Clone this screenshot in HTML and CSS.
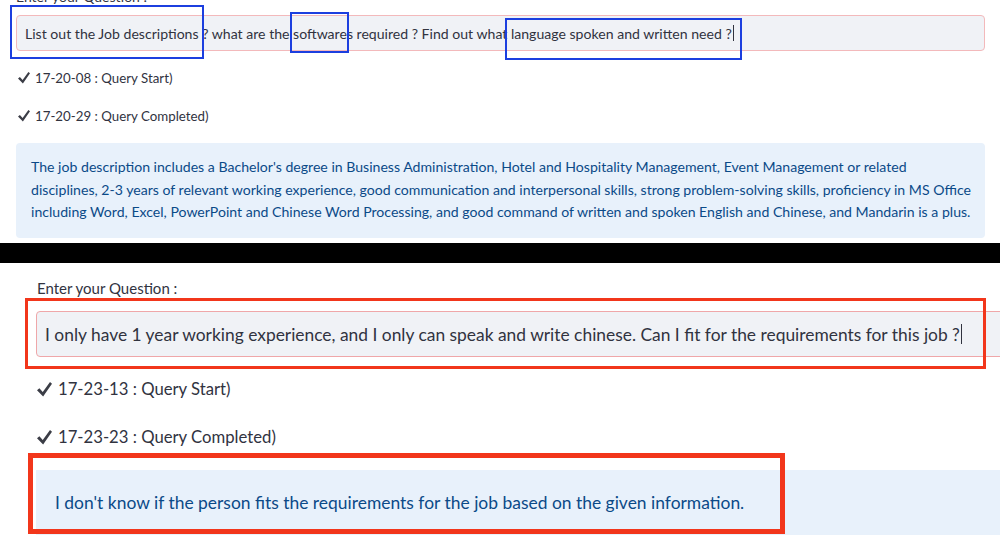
FILE: index.html
```html
<!DOCTYPE html>
<html>
<head>
<meta charset="utf-8">
<link rel="stylesheet" href="styles.css">
</head>
<body>
<div class="page">
  <section class="panel top">
    <div class="label">Enter your Question :</div>
    <div class="input">List out the Job descriptions ? what are the softwares required ? Find out what language spoken and written need ?<span class="caret"></span></div>
    <div class="status first"><svg class="check" viewBox="0 0 12 12"><polygon points="0,6.6 1.9,5 4.6,7.9 10.4,0 12,1.3 4.9,11.6"/></svg>17-20-08 : Query Start)</div>
    <div class="status"><svg class="check" viewBox="0 0 12 12"><polygon points="0,6.6 1.9,5 4.6,7.9 10.4,0 12,1.3 4.9,11.6"/></svg>17-20-29 : Query Completed)</div>
    <div class="info">The job description includes a Bachelor's degree in Business Administration, Hotel and Hospitality Management, Event Management or related<br>disciplines, 2-3 years of relevant working experience, good communication and interpersonal skills, strong problem-solving skills, proficiency in MS Office<br>including Word, Excel, PowerPoint and Chinese Word Processing, and good command of written and spoken English and Chinese, and Mandarin is a plus.</div>
    <div class="mark blue b1"></div>
    <div class="mark blue b2"></div>
    <div class="mark blue b3"></div>
  </section>
  <div class="divider"></div>
  <section class="panel bottom">
    <div class="label">Enter your Question :</div>
    <div class="input">I only have 1 year working experience, and I only can speak and write chinese. Can I fit for the requirements for this job ?<span class="caret"></span></div>
    <div class="status first"><svg class="check" viewBox="0 0 12 12"><polygon points="0,6.6 1.9,5 4.6,7.9 10.4,0 12,1.3 4.9,11.6"/></svg>17-23-13 : Query Start)</div>
    <div class="status"><svg class="check" viewBox="0 0 12 12"><polygon points="0,6.6 1.9,5 4.6,7.9 10.4,0 12,1.3 4.9,11.6"/></svg>17-23-23 : Query Completed)</div>
    <div class="info">I don't know if the person fits the requirements for the job based on the given information.</div>
    <div class="mark red r1"></div>
    <div class="mark red r2"></div>
  </section>
</div>
</body>
</html>
```

FILE: styles.css
```css
html, body {
  margin: 0;
  padding: 0;
  background: #ffffff;
  overflow: hidden;
}
.page {
  width: 1000px;
  height: 545px;
  overflow: hidden;
  font-family: Lato, "Noto Sans", sans-serif;
  color: #31333f;
}
.panel {
  position: relative;
  overflow: hidden;
  background: #ffffff;
}
.top {
  height: 243px;
  padding: 0 15px 0 16px;
  box-sizing: border-box;
  font-size: 14px;
}
.top .label {
  line-height: 20px;
  margin-top: -13px;
  margin-bottom: 8px;
}
.input {
  background: #f0f2f6;
  border: 1px solid #f3b9bb;
  border-radius: 4px;
  box-sizing: border-box;
  white-space: nowrap;
  display: flex;
  align-items: center;
}
.top .input {
  height: 36px;
  padding-left: 8px;
  font-size: 14.08px;
}
.caret {
  display: inline-block;
  width: 1px;
  height: 1.15em;
  background: #31333f;
  margin-left: 1px;
}
.status {
  display: flex;
  align-items: center;
}
.check {
  fill: #3b3d46;
  flex: none;
}
.top .status {
  height: 38px;
  padding-left: 2px;
  font-size: 13.3px;
}
.top .check {
  width: 12px;
  height: 12px;
  margin-right: 5px;
}
.top .status.first { margin-top: 8px; }
.info {
  background: #e8f1fb;
  color: #0b4a88;
  border-radius: 4px;
}
.top .info {
  margin-top: 8px;
  height: 95px;
  box-sizing: border-box;
  padding: 13px 15px 0 15px;
  font-size: 14.1px;
  line-height: 22.5px;
  white-space: nowrap;
}
.divider {
  height: 20px;
  background: #000000;
}
.bottom {
  height: 282px;
  padding-left: 36px;
  font-size: 16px;
}
.bottom .label {
  line-height: 20px;
  padding-top: 15px;
  padding-left: 1px;
  font-size: 15px;
}
.bottom .input {
  margin-top: 13px;
  width: 990px;
  height: 46px;
  padding-left: 8px;
  font-size: 17.4px;
  border-color: #efa7a9;
}
.bottom .status {
  height: 48px;
  padding-left: 1px;
  font-size: 16.7px;
}
.bottom .check {
  width: 15px;
  height: 15px;
  margin-right: 6px;
}
.bottom .status.first { margin-top: 8px; }
.bottom .info {
  margin-top: 9px;
  width: 990px;
  height: 65px;
  box-sizing: border-box;
  padding-left: 19px;
  display: flex;
  align-items: center;
  font-size: 17.45px;
  border-radius: 0;
}
.mark {
  position: absolute;
  box-sizing: border-box;
}
.blue { border: 2px solid #1c3fdf; }
.b1 { left: 10px; top: 5px; width: 194px; height: 54px; }
.b2 { left: 290px; top: 12px; width: 59px; height: 41px; }
.b3 { left: 505px; top: 18px; width: 237px; height: 42px; }
.red { border-color: #f2361b; border-style: solid; }
.r1 { left: 25px; top: 35px; width: 961px; height: 71px; border-width: 3px; }
.r2 { left: 28px; top: 190px; width: 757px; height: 81px; border-width: 5px; }
```
